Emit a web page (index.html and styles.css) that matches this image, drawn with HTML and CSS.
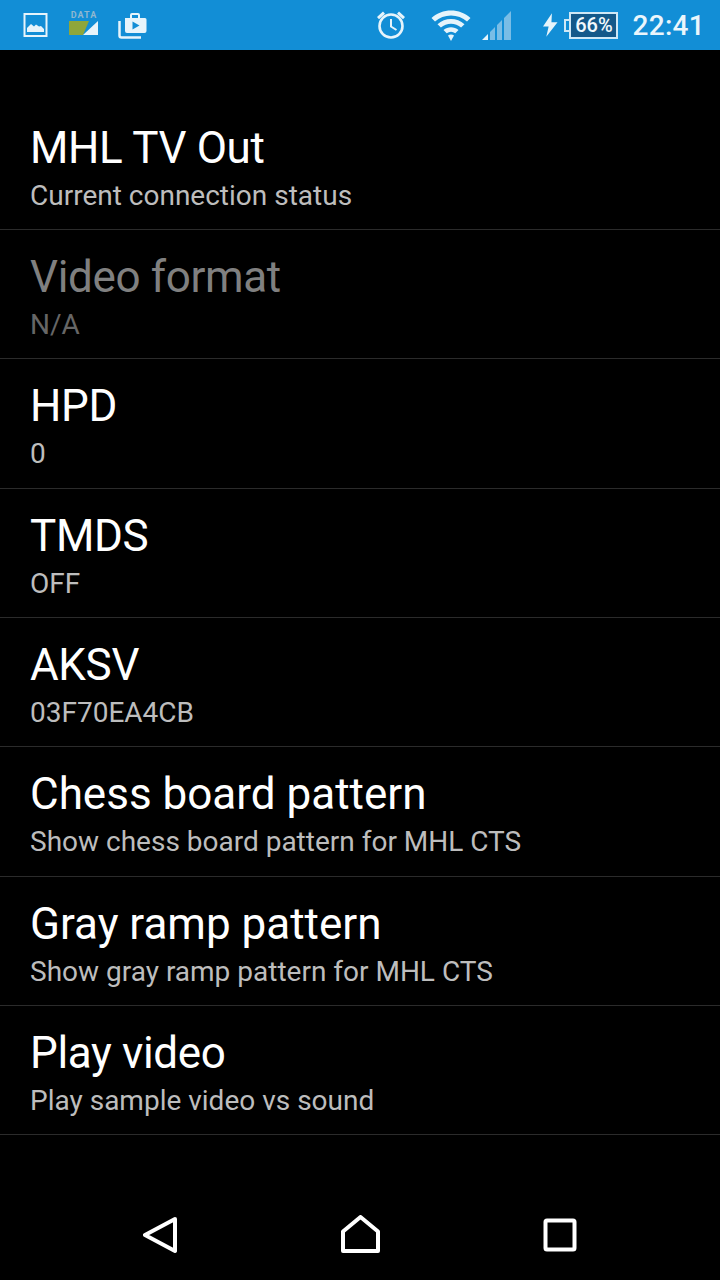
FILE: index.html
```html
<!DOCTYPE html>
<html lang="en">
<head>
<meta charset="utf-8">
<title>MHL TV Out</title>
<link rel="stylesheet" href="styles.css">
</head>
<body>
<div class="screen">
  <header class="status-bar">
    <div class="status-left">
      <svg class="ic" width="26" height="26" viewBox="0 0 26 26"><rect x="1.500" y="2" width="22" height="22" fill="none" stroke="#e6f4fb" stroke-width="2"/><path d="M4 20v-4l4-4 3 2.500 2-2 3 2 2-.5 3 3v3z" fill="#e6f4fb"/></svg>
      <div class="data-icon">
        <span class="data-label">DATA</span>
        <svg width="30" height="16" viewBox="0 0 30 16"><path d="M0 1h20l-6 14H0z" fill="#8fa63a"/><path d="M29 1v14H14z" fill="#e8f4fa"/></svg>
      </div>
      <svg class="ic bag" width="30" height="28" viewBox="0 0 30 28"><path d="M1.500 10v14.500a2 2 0 0 0 2 2H23" fill="none" stroke="#e6f4fb" stroke-width="2.500"/><path fill-rule="evenodd" d="M7 7h5V4a2 2 0 0 1 2-2h6a2 2 0 0 1 2 2v3h5a1.500 1.500 0 0 1 1.500 1.500V20a2 2 0 0 1-2 2H9a2 2 0 0 1-2-2zM14 4v3h6V4zM14.500 10.500v8l7-4z" fill="#e6f4fb"/></svg>
    </div>
    <div class="status-right">
      <svg class="ic alarm" width="30" height="30" viewBox="0 0 30 30"><circle cx="15" cy="16" r="11.500" fill="none" stroke="#e6f4fb" stroke-width="2.600"/><path d="M15 9V16.500l5.500 3.500" fill="none" stroke="#e6f4fb" stroke-width="2"/><path d="M1 7l6-5.500 2 2.200-6 5.500zM29 7l-6-5.500-2 2.200 6 5.500z" fill="#e6f4fb"/></svg>
      <svg class="ic wifi" width="40" height="33" viewBox="0 0 40 33"><path d="M0.500 9C11 -1 29 -1 39.500 9l-3.500 3.600C27.500 4.500 12.500 4.500 4 12.600z" fill="#e6f4fb"/><path d="M6.500 15.200C14 8.200 26 8.200 33.500 15.200l-3.400 3.400C24.500 13.500 15.500 13.500 9.900 18.600z" fill="#e6f4fb"/><path d="M12.500 21C16.800 17.400 23.200 17.400 27.500 21l-3.200 3.300C21.500 22.200 18.500 22.200 15.700 24.300z" fill="#e6f4fb"/><path d="M17 26.500c1.800-1.200 4.200-1.200 6 0l-3 5.500z" fill="#e6f4fb"/></svg>
      <svg class="ic signal" width="31" height="31" viewBox="0 0 31 31"><path d="M1 30l6-6v6z" fill="#e6f4fb"/><path d="M9 22l5-5v13H9zM16 15l5-5v20h-5zM23 8l7-7v29h-7z" fill="#79bde6"/></svg>
      <svg class="ic bolt" width="15" height="24" viewBox="0 0 16 25"><path d="M9.500 0L0 14h6L3.500 25 15.500 9.500H9z" fill="#e6f4fb"/></svg>
      <div class="battery">
        <span class="battery-cap"></span>
        <span class="battery-text">66%</span>
      </div>
      <span class="clock">22:41</span>
    </div>
  </header>

  <main class="settings-list">
    <section class="row tight"><h2 class="row-title">MHL TV Out</h2><p class="row-sub">Current connection status</p></section>
    <section class="row tight is-disabled"><h2 class="row-title">Video format</h2><p class="row-sub">N/A</p></section>
    <section class="row tight"><h2 class="row-title">HPD</h2><p class="row-sub">0</p></section>
    <section class="row tight"><h2 class="row-title">TMDS</h2><p class="row-sub">OFF</p></section>
    <section class="row tight"><h2 class="row-title">AKSV</h2><p class="row-sub">03F70EA4CB</p></section>
    <section class="row"><h2 class="row-title">Chess board pattern</h2><p class="row-sub">Show chess board pattern for MHL CTS</p></section>
    <section class="row"><h2 class="row-title">Gray ramp pattern</h2><p class="row-sub">Show gray ramp pattern for MHL CTS</p></section>
    <section class="row tight"><h2 class="row-title">Play video</h2><p class="row-sub">Play sample video vs sound</p></section>
  </main>

  <nav class="nav-bar">
    <svg width="34" height="40" viewBox="0 0 34 40"><path d="M32 4L2 20l30 16z" fill="none" stroke="#fff" stroke-width="4" stroke-linejoin="round"/></svg>
    <svg width="39" height="40" viewBox="0 0 39 40"><path d="M2 36V16.500L19.500 2 37 16.500V36z" fill="none" stroke="#fff" stroke-width="4" stroke-linejoin="round"/></svg>
    <svg width="34" height="34" viewBox="0 0 34 34"><rect x="2.500" y="2.500" width="29" height="29" rx="1.500" fill="none" stroke="#fff" stroke-width="4"/></svg>
  </nav>
</div>
</body>
</html>
```

FILE: styles.css
```css
* { box-sizing: border-box; }

html, body {
  margin: 0;
  background: #000;
}

.screen {
  width: 720px;
  height: 1280px;
  display: flex;
  flex-direction: column;
  background: #000;
  color: #fff;
  font-family: Roboto, "Liberation Sans", sans-serif;
  overflow: hidden;
}

/* Status bar */
.status-bar {
  height: 50px;
  flex: none;
  background: #128ed6;
  display: flex;
  justify-content: space-between;
  align-items: center;
  padding: 0 15px 0 23px;
}

.status-left, .status-right {
  display: flex;
  align-items: center;
}

.ic { display: block; flex: none; }

.status-left { gap: 20px; }
.bag { margin-left: -1px; }

.data-icon {
  display: flex;
  flex-direction: column;
  align-items: center;
  margin-top: -3px;
}

.data-label {
  font-size: 9px;
  line-height: 9px;
  font-weight: 700;
  letter-spacing: 1px;
  color: #8fb7cf;
}

.alarm { margin-right: 25px; }
.wifi { margin-right: 10px; }
.signal { margin-right: 31px; }
.bolt { margin-right: 11px; }

.battery {
  position: relative;
  width: 49px;
  height: 27px;
  margin-right: 14px;
  border: 2px solid #cfe8f6;
  background: #14598a;
  display: flex;
  align-items: center;
  justify-content: center;
}

.battery-cap {
  position: absolute;
  left: -7px;
  top: 5px;
  width: 5px;
  height: 13px;
  border: 2px solid #cfe8f6;
  border-right: 0;
}

.battery-text {
  font-size: 20px;
  font-weight: 500;
  color: #f2f9fd;
  line-height: 22px;
}

.clock {
  font-size: 28px;
  font-weight: 500;
  color: #eaf6fc;
  letter-spacing: 0.3px;
}

/* Settings rows */
.settings-list {
  padding-top: 50.8px;
  flex: 1;
}

.row {
  height: 129.3px;
  padding: 20px 30px 0;
  border-bottom: 1px solid #2b2b2b;
}

.row-title {
  margin: 0;
  font-size: 44px;
  line-height: 54px;
  font-weight: 400;
  color: #fff;
}

/* Short titles sit a touch closer together */
.tight .row-title { letter-spacing: -0.35px; }

.row-sub {
  margin: 1px 0 0;
  font-size: 28px;
  line-height: 40px;
  color: #bdbdbd;
}

.is-disabled .row-title { color: #808080; }
.is-disabled .row-sub { color: #666; }

/* Navigation keys */
.nav-bar {
  height: 90px;
  flex: none;
  display: flex;
  align-items: center;
  padding: 0 143px;
  justify-content: space-between;
}
```
